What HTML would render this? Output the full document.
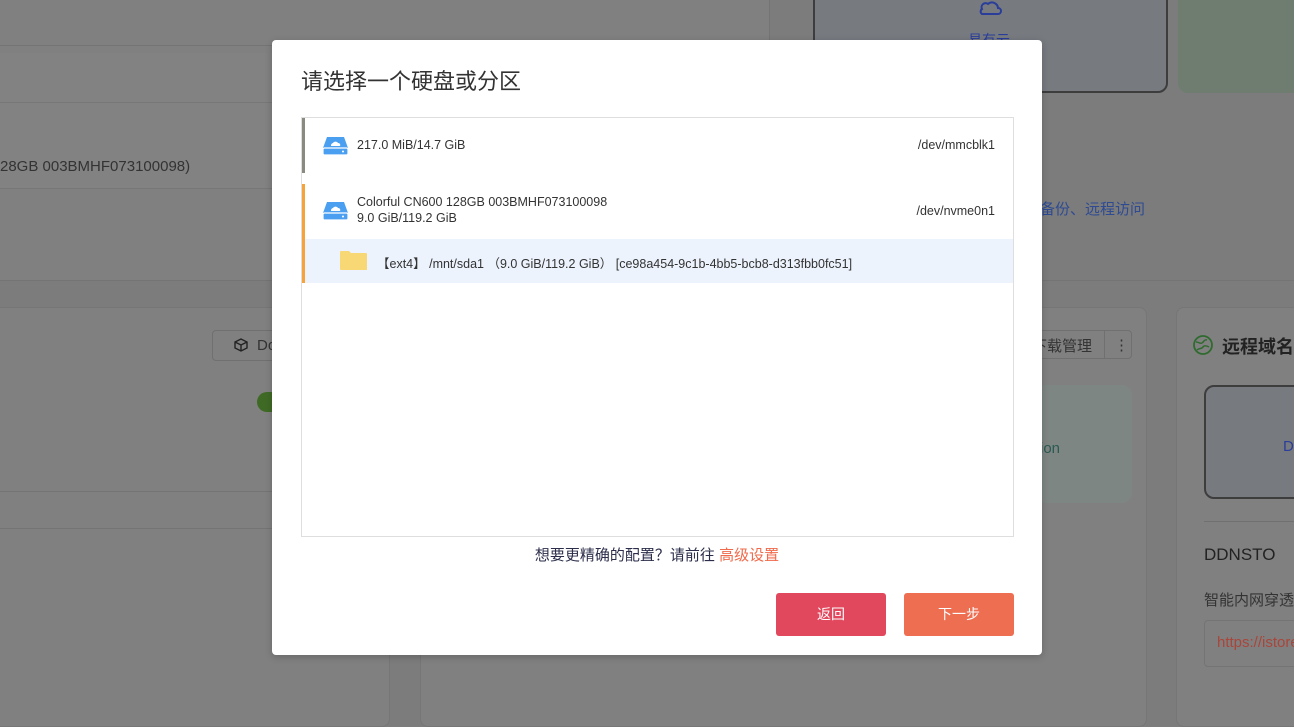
<!DOCTYPE html>
<html><head><meta charset="utf-8"><style>
*{box-sizing:border-box;margin:0;padding:0}
body{width:1294px;height:703px;overflow:hidden;background:#7c7c7c;font-family:"Liberation Sans","Noto Sans CJK SC",sans-serif;position:relative}
.a{position:absolute}
.card{position:absolute;background:#808080;border:1px solid #767676;border-radius:8px}
.dlg{position:absolute;left:272px;top:40px;width:770px;height:615px;background:#fff;border-radius:4px;box-shadow:0 2px 8px rgba(0,0,0,.2)}
.row{position:absolute;left:0;width:711px;font-size:12.5px;color:#333}
.dev{position:absolute;right:18px;font-size:12.5px;color:#333}
.btn{position:absolute;top:553px;width:110px;height:43px;border-radius:3px;color:#fff;font-size:14px;text-align:center;line-height:43px}
</style></head><body>
<div class="a" style="left:0;top:0;width:770px;height:280px;background:#808080;border-right:1px solid #747474"></div>
<div class="a" style="left:0;top:45px;width:770px;height:1px;background:#747474"></div>
<div class="a" style="left:0;top:53px;width:770px;height:50px;background:#828282;border-bottom:1px solid #777"></div>
<div class="a" style="left:0;top:103px;width:770px;height:86px;background:#828282;border-bottom:1px solid #777"></div>
<div class="a" style="left:0;top:158px;font-size:15px;color:#333">28GB 003BMHF073100098)</div>
<div class="a" style="left:813px;top:-10px;width:355px;height:103px;background:#777b80;border:2px solid #3d3d3d;border-radius:10px"></div>
<svg class="a" style="left:978px;top:0" width="24" height="16" viewBox="0 0 24 16"><path d="M4 14h16a3 3 0 0 0 0-6 6 6 0 0 0-10-4 4 4 0 0 0-6 5 3 3 0 0 0 0 5z" fill="none" stroke="#2a3d9a" stroke-width="2"/></svg>
<div class="a" style="left:968px;top:30px;font-size:14px;color:#2a3d9a;height:10px;overflow:hidden">易有云</div>
<div class="a" style="left:1178px;top:-10px;width:130px;height:103px;background:#6f7d71;border-radius:10px"></div>
<div class="a" style="left:1040px;top:198px;font-size:15px;color:#2d4a92">备份、远程访问</div>
<div class="a" style="left:0;top:280px;width:1294px;height:1px;background:#747474"></div>
<div class="card" style="left:-10px;top:307px;width:400px;height:420px"></div>
<div class="a" style="left:212px;top:330px;width:80px;height:31px;border:1px solid #707070;border-radius:4px;font-size:15px;color:#333;padding:6px 0 0 44px">Do</div>
<svg class="a" style="left:233px;top:337px" width="16" height="16" viewBox="0 0 16 16"><path d="M2 5l6-3 6 3v6l-6 3-6-3zM2 5l6 3 6-3M8 8v6" fill="none" stroke="#222" stroke-width="1.4"/></svg>
<div class="a" style="left:257px;top:392px;width:30px;height:20px;border-radius:10px;background:#3f6a25"></div>
<div class="a" style="left:0;top:491px;width:390px;height:1px;background:#747474"></div>
<div class="a" style="left:0;top:528px;width:390px;height:1px;background:#747474"></div>
<div class="card" style="left:420px;top:307px;width:727px;height:420px"></div>
<div class="a" style="left:1020px;top:330px;width:112px;height:29px;border:1px solid #707070;border-radius:4px"></div>
<div class="a" style="left:1104px;top:330px;width:1px;height:29px;background:#707070"></div>
<div class="a" style="left:1032px;top:335px;font-size:15px;color:#333">下载管理</div>
<div class="a" style="left:1114px;top:336px;font-size:15px;color:#333">⋮</div>
<div class="a" style="left:1000px;top:385px;width:132px;height:118px;background:#7e8683;border-radius:10px"></div>
<div class="a" style="left:1040px;top:440px;font-size:15px;color:#2c5a52">ion</div>
<div class="card" style="left:1176px;top:307px;width:140px;height:420px"></div>
<svg class="a" style="left:1192px;top:334px" width="22" height="22" viewBox="0 0 22 22"><circle cx="11" cy="11" r="9" fill="none" stroke="#2f6a2f" stroke-width="1.8"/><path d="M4 8c3 0 4 2 6 1s2-4 5-3M5 16c2-2 5-1 6-3s4-1 6 0" fill="none" stroke="#2f6a2f" stroke-width="1.5"/></svg>
<div class="a" style="left:1222px;top:333px;font-size:18px;font-weight:bold;color:#222">远程域名</div>
<div class="a" style="left:1204px;top:385px;width:120px;height:114px;background:#777b80;border:2px solid #3d3d3d;border-radius:10px"></div>
<div class="a" style="left:1283px;top:438px;font-size:15px;color:#2a3d9a">D</div>
<div class="a" style="left:1204px;top:521px;width:90px;height:1px;background:#707070"></div>
<div class="a" style="left:1204px;top:545px;font-size:17px;color:#222">DDNSTO</div>
<div class="a" style="left:1204px;top:589px;font-size:15px;color:#333">智能内网穿透</div>
<div class="a" style="left:1204px;top:620px;width:110px;height:47px;border:1px solid #747474;border-radius:4px;font-size:15px;color:#a9453a;padding:13px 0 0 12px">https://istore</div>

<div class="dlg">
 <div class="a" style="left:29px;top:24px;font-size:22px;color:#333">请选择一个硬盘或分区</div>
 <div class="a" style="left:29px;top:77px;width:713px;height:420px;border:1px solid #dedede">
  <div class="row" style="top:0;height:55px;border-left:3px solid #8a8a80">
   <svg class="a" style="left:17px;top:17px" width="27" height="21" viewBox="0 0 27 21"><path d="M5 2h17l4 11v6H1v-6z" fill="#4a9ff0"/><rect x="1" y="13" width="25" height="7" rx="1.5" fill="#4a9ff0" stroke="#fff" stroke-width="1.2"/><circle cx="21" cy="16.5" r="1" fill="#fff"/><path d="M9 11a2.5 2.5 0 0 1 2-3 3 3 0 0 1 5 0 2 2 0 0 1 2 3z" fill="#fff"/></svg>
   <div class="a" style="left:52px;top:20px">217.0 MiB/14.7 GiB</div>
   <div class="dev" style="top:20px">/dev/mmcblk1</div>
  </div>
  <div class="row" style="top:66px;height:99px;border-left:3px solid #f5a33a">
   <svg class="a" style="left:17px;top:16px" width="27" height="21" viewBox="0 0 27 21"><path d="M5 2h17l4 11v6H1v-6z" fill="#4a9ff0"/><rect x="1" y="13" width="25" height="7" rx="1.5" fill="#4a9ff0" stroke="#fff" stroke-width="1.2"/><circle cx="21" cy="16.5" r="1" fill="#fff"/><path d="M9 11a2.5 2.5 0 0 1 2-3 3 3 0 0 1 5 0 2 2 0 0 1 2 3z" fill="#fff"/></svg>
   <div class="a" style="left:52px;top:10px;line-height:16px">Colorful CN600 128GB 003BMHF073100098<br>9.0 GiB/119.2 GiB</div>
   <div class="dev" style="top:20px">/dev/nvme0n1</div>
   <div class="a" style="left:0;top:55px;width:708px;height:44px;background:#ecf3fd">
    <svg class="a" style="left:35px;top:11px" width="27" height="21" viewBox="0 0 27 21"><path d="M0 2a1 1 0 0 1 1-1h8l2 2h15a1 1 0 0 1 1 1v16H1a1 1 0 0 1-1-1z" fill="#f8d775"/></svg>
    <div class="a" style="left:72px;top:14px">【ext4】 /mnt/sda1 （9.0 GiB/119.2 GiB） [ce98a454-9c1b-4bb5-bcb8-d313fbb0fc51]</div>
   </div>
  </div>
 </div>
 <div class="a" style="left:0;width:770px;top:504px;text-align:center;font-size:15px;color:#2b2d4a">想要更精确的配置？请前往 <span style="color:#f06a4b">高级设置</span></div>
 <div class="btn" style="left:504px;background:#e2485d">返回</div>
 <div class="btn" style="left:632px;background:#ee6e52">下一步</div>
</div>
</body></html>
